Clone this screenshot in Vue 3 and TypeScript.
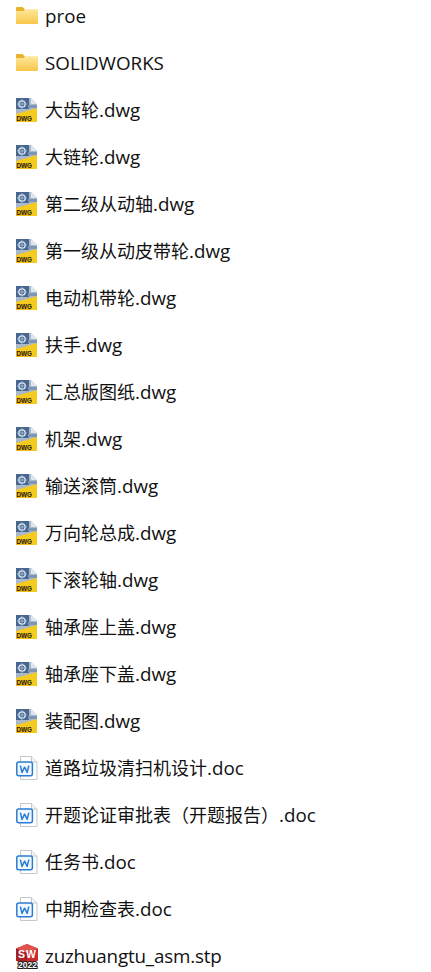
<script setup lang="ts">
type Kind = 'folder' | 'dwg' | 'doc' | 'sw'
interface Row { name: string; kind: Kind }
const rows: Row[] = [
  { name: 'proe', kind: 'folder' },
  { name: 'SOLIDWORKS', kind: 'folder' },
  ...['大齿轮', '大链轮', '第二级从动轴', '第一级从动皮带轮', '电动机带轮', '扶手', '汇总版图纸', '机架', '输送滚筒', '万向轮总成', '下滚轮轴', '轴承座上盖', '轴承座下盖', '装配图'].map(
    (n): Row => ({ name: n + '.dwg', kind: 'dwg' })
  ),
  ...['道路垃圾清扫机设计', '开题论证审批表（开题报告）', '任务书', '中期检查表'].map(
    (n): Row => ({ name: n + '.doc', kind: 'doc' })
  ),
  { name: 'zuzhuangtu_asm.stp', kind: 'sw' }
]
// Latin runs are set a touch larger than the CJK runs, as the reference's UI font does.
const parts = (s: string): string[] => s.match(/[\x00-\x7f]+|[^\x00-\x7f]+/g) ?? []
const isLatin = (s: string): boolean => s.charCodeAt(0) < 128
</script>

<template>
  <ul class="list">
    <li v-for="r in rows" :key="r.name" class="row" :class="'row-' + r.kind">
      <svg class="icon" viewBox="0 0 24 24" aria-hidden="true">
        <template v-if="r.kind === 'folder'">
          <defs>
            <linearGradient id="folderFront" x1="0" y1="0" x2="0" y2="1">
              <stop offset="0" stop-color="#fee89c" />
              <stop offset="1" stop-color="#f8c648" />
            </linearGradient>
          </defs>
          <path d="M1 8V4c0-.6.4-1 1-1h5.6l2.2 2.2V8z" fill="#eeb12f" />
          <path d="M1 7h7.6l2-1.8H22c.6 0 1 .4 1 1V19c0 .6-.4 1-1 1H2c-.6 0-1-.4-1-1z" fill="url(#folderFront)" />
        </template>
        <template v-else-if="r.kind === 'dwg'">
          <path d="M1 0h15l6 6v18H1z" fill="#a9b9cb" />
          <path d="M16 0l6 6h-6z" fill="#dfe6ee" />
          <path d="M1 0h13v11H1z" fill="#48678f" />
          <circle cx="7" cy="6" r="3.2" fill="none" stroke="#dfe8f2" stroke-width="1.3" />
          <path d="M7 1v10M2 6h10" stroke="#a9c0da" stroke-width=".8" />
          <path d="M13 7h9v3h-9z" fill="#7d96b5" />
          <path d="M1 16 22 10v14H1z" fill="#f6cb1f" />
          <path d="M1 18h15v6H1z" fill="#f2bb10" />
          <text x="1.4" y="23" class="dwg-label">DWG</text>
        </template>
        <template v-else-if="r.kind === 'doc'">
          <path d="M5.5 .5h11L22 6v17.5H5.5z" fill="#fff" stroke="#c3c8ce" />
          <path d="M16.5 .5V6H22" fill="#f2f4f6" stroke="#c3c8ce" />
          <rect x="1.8" y="6" width="15.6" height="13.8" rx="2" fill="#f2f8ff" stroke="#2b7cd3" stroke-width="1.5" />
          <path d="M5.4 9.6l1.6 6.8 2.6-5.2 2.6 5.2 1.6-6.8" fill="none" stroke="#2b7cd3" stroke-width="1.5" stroke-linejoin="round" />
        </template>
        <template v-else>
          <path d="M12 0 23 4.5v12L12 22 1 16.5v-12z" fill="#cc2a2c" />
          <path d="M12 0 23 4.5 12 9 1 4.5z" fill="#e0524c" />
          <path d="M12 9V22L1 16.5v-12z" fill="#a81f25" />
          <text x="3" y="13.5" class="sw-label">S</text>
          <text x="11" y="13.5" class="sw-label">W</text>
          <text x="12.5" y="24" text-anchor="middle" class="sw-year">2022</text>
        </template>
      </svg>
      <span class="name"><span v-for="(p, i) in parts(r.name)" :key="i" :class="{ latin: isLatin(p) }">{{ p }}</span></span>
    </li>
  </ul>
</template>

<style scoped>
.list {
  list-style: none;
  margin: 0;
  padding: 0 0 0 15px;
  display: flex;
  flex-direction: column;
  gap: 15px;
  width: 416px;
  height: 972px;
  overflow: hidden;
  background: #fff;
}
.row {
  height: 32px;
  display: flex;
  align-items: center;
  gap: 6px;
  flex: none;
}
.icon {
  width: 24px;
  height: 24px;
  flex: none;
  overflow: visible;
}
.name {
  font-family: "Open Sans", "Noto Sans CJK SC", sans-serif;
  font-size: 18px;
  line-height: 32px;
  color: #111;
  white-space: nowrap;
}
.latin {
  font-size: 18.8px;
}
.row-sw .latin {
  letter-spacing: -0.17px;
}
.dwg-label {
  font-family: "Liberation Sans", sans-serif;
  font-size: 6.4px;
  font-weight: 700;
  fill: #1c1c1c;
}
.sw-label {
  font-family: "Liberation Sans", sans-serif;
  font-size: 10.5px;
  font-weight: 700;
  fill: #fff;
}
.sw-year {
  font-family: "Liberation Sans", sans-serif;
  font-size: 8.5px;
  font-weight: 700;
  fill: #fff;
  stroke: #1d1d1d;
  stroke-width: 2px;
  paint-order: stroke;
}
</style>
